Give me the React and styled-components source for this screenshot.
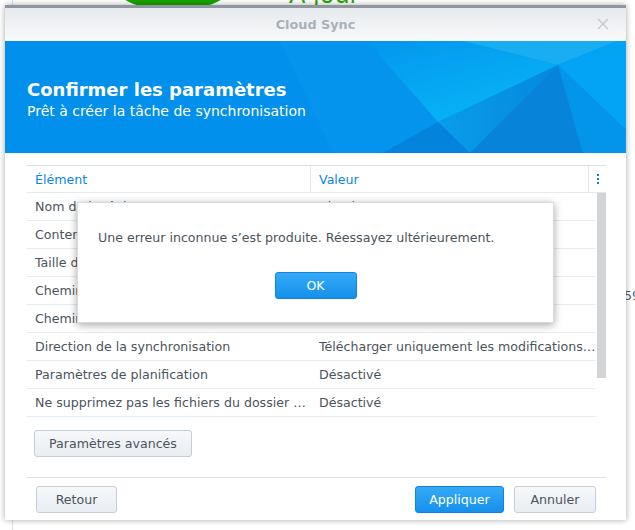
import React from "react";
import styled, { createGlobalStyle } from "styled-components";

const GlobalStyle = createGlobalStyle`
  html, body {
    margin: 0;
    padding: 0;
    background: #ffffff;
  }
  body {
    font-family: "DejaVu Sans", Verdana, sans-serif;
    -webkit-font-smoothing: antialiased;
  }
`;

const rows = [
  ["Nom de la tâche", "Cloud Sync"],
  ["Conteneur", "synology-backup"],
  ["Taille de la partie", "32 Mo"],
  ["Chemin local", "/volume1/partage"],
  ["Chemin distant", "Dossier racine"],
  ["Direction de la synchronisation", "Télécharger uniquement les modifications distantes"],
  ["Paramètres de planification", "Désactivé"],
  ["Ne supprimez pas les fichiers du dossier de destination", "Désactivé"],
];

// facettes du bandeau bleu
function HeaderArt() {
  return (
    <svg width="100%" height="100%" viewBox="0 0 621 112" preserveAspectRatio="none">
      <defs>
        <linearGradient id="glow" x1="0" y1="0" x2="0.6" y2="1">
          <stop offset="0" stopColor="#0396ee" />
          <stop offset="1" stopColor="#07b4f6" />
        </linearGradient>
        <linearGradient id="glow2" x1="0" y1="0" x2="1" y2="0">
          <stop offset="0" stopColor="#0a9cea" />
          <stop offset="1" stopColor="#0389de" />
        </linearGradient>
      </defs>
      <rect width="621" height="112" fill="#0190ec" />
      <polygon points="275,0 362,0 433,81 378,112 328,112" fill="#0493ed" />
      <polygon points="362,0 458,0 553,24 433,81" fill="url(#glow)" />
      <polygon points="458,0 612,0 553,24" fill="#19aef1" />
      <polygon points="612,0 621,0 621,89 553,24" fill="#03a4f3" />
      <polygon points="433,81 553,24 465,112" fill="url(#glow2)" />
      <polygon points="433,81 465,112 378,112" fill="#0383dc" />
      <polygon points="553,24 465,112 578,112" fill="#0784da" />
      <polygon points="553,24 578,112 621,112 621,89" fill="#0395ea" />
    </svg>
  );
}

export default function App() {
  return (
    <>
      <GlobalStyle />
      <Desktop>
        <GreenBlob />
        <GreenText>À jour</GreenText>
        <DesktopEdge />
        <BehindText>59</BehindText>
        <Window>
          <TitleBar>
            <TitleText>Cloud Sync</TitleText>
            <CloseBtn>
              <svg width="12" height="12" viewBox="0 0 12 12">
                <path d="M1 1 L11 11 M11 1 L1 11" stroke="#c3c8ce" strokeWidth="1.4" />
              </svg>
            </CloseBtn>
          </TitleBar>
          <Banner>
            <BannerArt>
              <HeaderArt />
            </BannerArt>
            <BannerTitle>Confirmer les paramètres</BannerTitle>
            <BannerSub>Prêt à créer la tâche de synchronisation</BannerSub>
          </Banner>
          <Body>
            <Table>
              <HeadRow>
                <HeadCell $w={284}>Élément</HeadCell>
                <HeadCell $flex>Valeur</HeadCell>
                <DotsCell>
                  <svg width="4" height="12" viewBox="0 0 4 12">
                    <rect x="1" y="1" width="2" height="2" fill="#0086e5" />
                    <rect x="1" y="5" width="2" height="2" fill="#0086e5" />
                    <rect x="1" y="9" width="2" height="2" fill="#0086e5" />
                  </svg>
                </DotsCell>
              </HeadRow>
              <RowsWrap>
                <Rows>
                  {rows.map(([k, v]) => (
                    <Row key={k}>
                      <Cell $w={284}>{k}</Cell>
                      <Cell $flex>{v}</Cell>
                    </Row>
                  ))}
                </Rows>
                <ScrollTrack>
                  <ScrollThumb />
                </ScrollTrack>
              </RowsWrap>
            </Table>
            <AdvRow>
              <Button>Paramètres avancés</Button>
            </AdvRow>
            <Footer>
              <Button $w={81}>Retour</Button>
              <FooterRight>
                <Button $primary $w={89}>Appliquer</Button>
                <Button $w={82}>Annuler</Button>
              </FooterRight>
            </Footer>
          </Body>
          <Modal>
            <ModalText>Une erreur inconnue s’est produite. Réessayez ultérieurement.</ModalText>
            <ModalActions>
              <Button $primary $w={82}>OK</Button>
            </ModalActions>
          </Modal>
        </Window>
      </Desktop>
    </>
  );
}

const Desktop = styled.div`
  position: relative;
  width: 635px;
  height: 530px;
  overflow: hidden;
  background: #ffffff;
`;

const GreenBlob = styled.div`
  position: absolute;
  left: 118px;
  top: -30px;
  width: 110px;
  height: 40px;
  border-radius: 50%;
  background: #17a400;
`;

const GreenText = styled.div`
  position: absolute;
  left: 289px;
  top: -19px;
  font-family: "DejaVu Sans", sans-serif;
  font-size: 24px;
  color: #2aa80a;
`;

const DesktopEdge = styled.div`
  position: absolute;
  left: 12px;
  top: 0;
  bottom: 0;
  width: 1px;
  background: #dde1e5;
`;

const BehindText = styled.div`
  position: absolute;
  left: 624px;
  top: 288px;
  font-size: 12.6px;
  color: #555d66;
`;

const Window = styled.div`
  position: absolute;
  left: 5px;
  top: 5px;
  width: 621px;
  height: 515px;
  background: #ffffff;
  border-top: 3px solid #8f969e;
  box-shadow: 0 0 6px rgba(0, 0, 0, 0.35);
  display: flex;
  flex-direction: column;
  box-sizing: border-box;
`;

const TitleBar = styled.div`
  flex: none;
  height: 33px;
  display: flex;
  align-items: center;
  justify-content: center;
  position: relative;
  background: linear-gradient(#e6e9ed, #f9fafb);
`;

const TitleText = styled.div`
  font-weight: bold;
  font-size: 12.8px;
  color: #a9b1ba;
`;

const CloseBtn = styled.div`
  position: absolute;
  right: 17px;
  top: 10px;
  display: flex;
`;

const Banner = styled.div`
  flex: none;
  position: relative;
  box-sizing: border-box;
  height: 112px;
  display: flex;
  flex-direction: column;
  justify-content: center;
  padding: 6px 22px 0;
  color: #ffffff;
  overflow: hidden;
`;

const BannerArt = styled.div`
  position: absolute;
  inset: 0;
  z-index: 0;
`;

const BannerTitle = styled.div`
  position: relative;
  font-size: 18px;
  font-weight: bold;
  line-height: 22px;
`;

const BannerSub = styled.div`
  position: relative;
  font-size: 14px;
  line-height: 20px;
`;

const Body = styled.div`
  flex: 1;
  display: flex;
  flex-direction: column;
  padding: 12px 20px 0 22px;
`;

const Table = styled.div`
  border-top: 1px solid #dbe3ea;
  display: flex;
  flex-direction: column;
`;

const HeadRow = styled.div`
  display: flex;
  height: 26px;
  border-bottom: 1px solid #e3e9ef;
`;

const HeadCell = styled.div`
  ${(p) => (p.$flex ? "flex: 1;" : `width: ${p.$w}px;`)}
  box-sizing: border-box;
  padding-left: 8px;
  display: flex;
  align-items: center;
  font-size: 12.6px;
  color: #0a86e3;
  border-right: 1px solid #e3e9ef;
`;

const DotsCell = styled.div`
  width: 17px;
  display: flex;
  align-items: center;
  justify-content: center;
`;

const RowsWrap = styled.div`
  display: flex;
`;

const Rows = styled.div`
  flex: 1;
  min-width: 0;
  display: flex;
  flex-direction: column;
`;

const Row = styled.div`
  display: flex;
  height: 28px;
  box-sizing: border-box;
  border-bottom: 1px solid #e6ecf2;
`;

const Cell = styled.div`
  ${(p) => (p.$flex ? "flex: 1; min-width: 0;" : `width: ${p.$w}px; flex: none;`)}
  box-sizing: border-box;
  padding: 0 0 0 8px;
  font-size: 12.6px;
  line-height: 27px;
  color: #4b545d;
  white-space: nowrap;
  overflow: hidden;
  text-overflow: ellipsis;
`;

const ScrollTrack = styled.div`
  flex: none;
  width: 9px;
  margin-left: 1px;
  display: flex;
  flex-direction: column;
`;

const ScrollThumb = styled.div`
  height: 185px;
  background: #d3d4d6;
`;

const AdvRow = styled.div`
  padding: 13px 0 0 7px;
  display: flex;
`;

const Button = styled.div`
  box-sizing: border-box;
  height: 27px;
  ${(p) => (p.$w ? `width: ${p.$w}px;` : "padding: 0 14px;")}
  display: flex;
  align-items: center;
  justify-content: center;
  border-radius: 3px;
  font-size: 12.6px;
  border: 1px solid ${(p) => (p.$primary ? "#1283d8" : "#c5ced7")};
  background: ${(p) =>
    p.$primary
      ? "linear-gradient(#35aaf8, #1590ea)"
      : "linear-gradient(#f6f8fa, #e9eef3)"};
  color: ${(p) => (p.$primary ? "#ffffff" : "#4b545d")};
`;

const Footer = styled.div`
  margin-top: 20px;
  border-top: 1px solid #dfe3e8;
  padding: 8px 10px 0 9px;
  display: flex;
  justify-content: space-between;
`;

const FooterRight = styled.div`
  display: flex;
  gap: 10px;
`;

const Modal = styled.div`
  position: absolute;
  left: 72px;
  top: 194px;
  width: 477px;
  height: 121px;
  box-sizing: border-box;
  background: #ffffff;
  border: 1px solid #d6dbe0;
  box-shadow: 0 2px 8px rgba(0, 0, 0, 0.35);
  display: flex;
  flex-direction: column;
  padding: 27px 20px 0;
`;

const ModalText = styled.div`
  font-size: 12.6px;
  color: #4b545d;
`;

const ModalActions = styled.div`
  display: flex;
  justify-content: center;
  margin-top: 27px;
`;
